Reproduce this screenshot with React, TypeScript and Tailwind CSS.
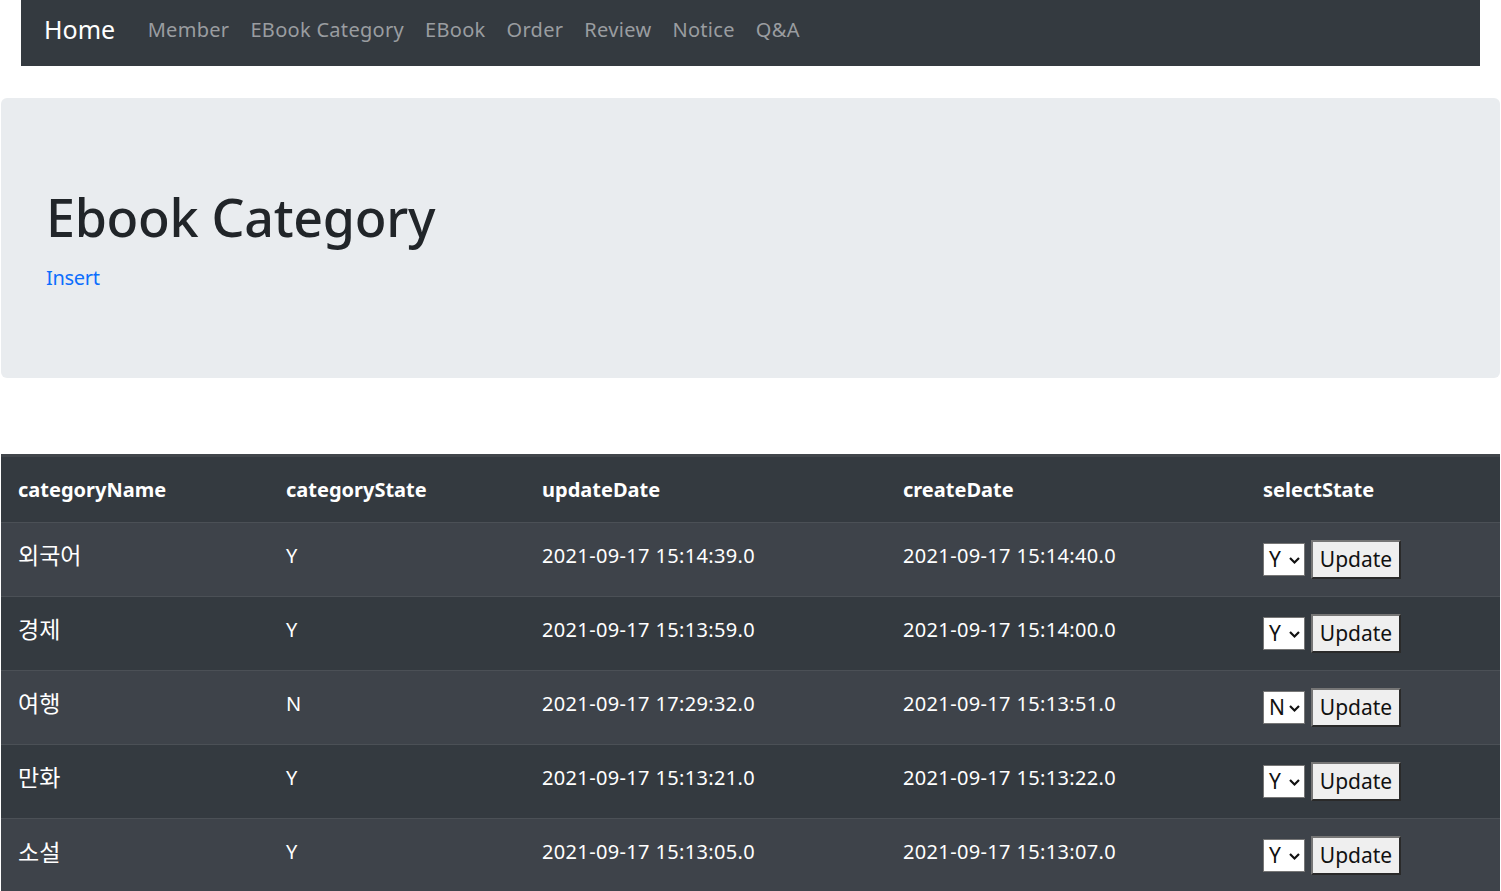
const navLinks = ['Member', 'EBook Category', 'EBook', 'Order', 'Review', 'Notice', 'Q&A'];

const rows = [
  { name: '외국어', state: 'Y', updated: '2021-09-17 15:14:39.0', created: '2021-09-17 15:14:40.0' },
  { name: '경제', state: 'Y', updated: '2021-09-17 15:13:59.0', created: '2021-09-17 15:14:00.0' },
  { name: '여행', state: 'N', updated: '2021-09-17 17:29:32.0', created: '2021-09-17 15:13:51.0' },
  { name: '만화', state: 'Y', updated: '2021-09-17 15:13:21.0', created: '2021-09-17 15:13:22.0' },
  { name: '소설', state: 'Y', updated: '2021-09-17 15:13:05.0', created: '2021-09-17 15:13:07.0' },
];

export default function App() {
  return (
    <div
      className="min-h-screen bg-white text-[#212529]"
      style={{ fontFamily: '"Noto Sans", "Noto Sans CJK KR", sans-serif' }}
    >
      {/* navbar */}
      <nav className="mx-[21px] h-[66px] bg-[#343a40] flex items-center pl-[23px] pb-[6px]">
        <span className="text-white text-[25px] mr-[27px]">Home</span>
        <div className="flex gap-[10px] text-[20px] text-[#9a9da0] tracking-[0.3px]">
          {navLinks.map((l) => (
            <a key={l} className="px-[5.5px]">{l}</a>
          ))}
        </div>
      </nav>

      {/* jumbotron */}
      <div className="mt-[32px] mx-[1px] h-[280px] bg-[#e9ecef] rounded-[6px] px-[45px] pt-[84px]">
        <h1 className="text-[52px] leading-[70px] font-medium tracking-[-0.3px] text-[#212529]">Ebook Category</h1>
        <a className="block mt-[11px] text-[20px] text-[#0d6efd] tracking-[-0.3px]">Insert</a>
      </div>

      {/* table */}
      <div className="mt-[76px] mx-[1px]">
        <table className="w-full table-fixed border-collapse text-white text-[20px]">
          <thead>
            <tr className="bg-[#343a40] border-t-[3px] border-[#41464b] h-[67px]">
              <th className="text-left font-bold px-[17px] w-[268px]">categoryName</th>
              <th className="text-left font-bold px-[17px] w-[256px]">categoryState</th>
              <th className="text-left font-bold px-[17px] w-[361px]">updateDate</th>
              <th className="text-left font-bold px-[17px] w-[360px]">createDate</th>
              <th className="text-left font-bold px-[17px]">selectState</th>
            </tr>
          </thead>
          <tbody>
            {rows.map((r, i) => (
              <tr
                key={r.name}
                className={`border-t border-[#4b5056] h-[74px] ${i % 2 === 0 ? 'bg-[#3e434a]' : 'bg-[#343a40]'}`}
              >
                <td className="px-[17px] pb-[8px] text-[23px]">{r.name}</td>
                <td className="px-[17px] pb-[8px]">{r.state}</td>
                <td className="px-[17px] pb-[8px] tracking-[0.35px]">{r.updated}</td>
                <td className="px-[17px] pb-[8px] tracking-[0.35px]">{r.created}</td>
                <td className="px-[17px]">
                  <div className="flex items-center gap-[6px]">
                    <div className="w-[42px] h-[33px] bg-white border border-[#767676] flex items-center justify-between pl-[5px] pr-[3px] text-[#111] text-[21px]">
                      <span>{r.state}</span>
                      <svg width="13" height="12" viewBox="0 0 13 12" fill="none" stroke="#111" strokeWidth="2.2">
                        <path d="M2 4l4.5 4.5L11 4" />
                      </svg>
                    </div>
                    <button className="h-[39px] w-[90px] bg-[#efefef] text-[#111] text-[21px] border-2 border-t-[#767676] border-l-[#767676] border-r-[#2a2a2a] border-b-[#2a2a2a]">
                      Update
                    </button>
                  </div>
                </td>
              </tr>
            ))}
          </tbody>
        </table>
      </div>
    </div>
  );
}
